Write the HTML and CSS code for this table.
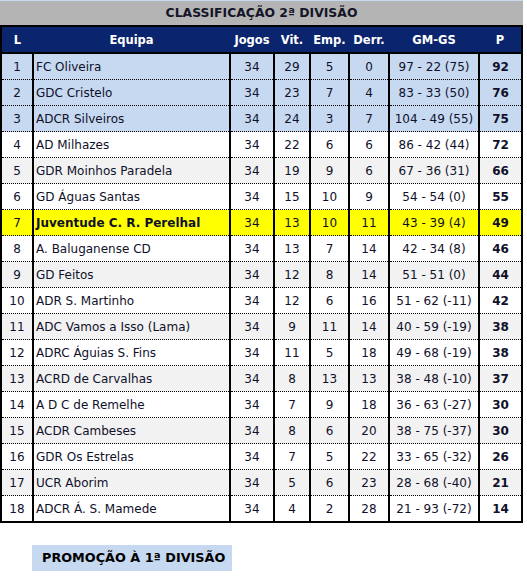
FILE: index.html
```html
<!DOCTYPE html>
<html lang="pt">
<head>
<meta charset="utf-8">
<title>Classificação 2ª Divisão</title>
<link rel="stylesheet" href="styles.css">
</head>
<body>
<div class="page">
  <div class="title">CLASSIFICAÇÃO 2ª DIVISÃO</div>
  <table class="standings">
    <colgroup>
      <col class="c-pos"><col class="c-team"><col class="c-j"><col class="c-v"><col class="c-e"><col class="c-d"><col class="c-g"><col class="c-p">
    </colgroup>
    <thead>
      <tr><th>L</th><th>Equipa</th><th>Jogos</th><th>Vit.</th><th>Emp.</th><th>Derr.</th><th>GM-GS</th><th>P</th></tr>
    </thead>
    <tbody>
      <tr class="promo"><td>1</td><td class="team">FC Oliveira</td><td>34</td><td>29</td><td>5</td><td>0</td><td>97 - 22 (75)</td><td class="pts">92</td></tr>
      <tr class="promo"><td>2</td><td class="team">GDC Cristelo</td><td>34</td><td>23</td><td>7</td><td>4</td><td>83 - 33 (50)</td><td class="pts">76</td></tr>
      <tr class="promo"><td>3</td><td class="team">ADCR Silveiros</td><td>34</td><td>24</td><td>3</td><td>7</td><td>104 - 49 (55)</td><td class="pts">75</td></tr>
      <tr class="w"><td>4</td><td class="team">AD Milhazes</td><td>34</td><td>22</td><td>6</td><td>6</td><td>86 - 42 (44)</td><td class="pts">72</td></tr>
      <tr class="g"><td>5</td><td class="team">GDR Moinhos Paradela</td><td>34</td><td>19</td><td>9</td><td>6</td><td>67 - 36 (31)</td><td class="pts">66</td></tr>
      <tr class="w"><td>6</td><td class="team">GD Águas Santas</td><td>34</td><td>15</td><td>10</td><td>9</td><td>54 - 54 (0)</td><td class="pts">55</td></tr>
      <tr class="hl"><td>7</td><td class="team">Juventude C. R. Perelhal</td><td>34</td><td>13</td><td>10</td><td>11</td><td>43 - 39 (4)</td><td class="pts">49</td></tr>
      <tr class="w"><td>8</td><td class="team">A. Baluganense CD</td><td>34</td><td>13</td><td>7</td><td>14</td><td>42 - 34 (8)</td><td class="pts">46</td></tr>
      <tr class="g"><td>9</td><td class="team">GD Feitos</td><td>34</td><td>12</td><td>8</td><td>14</td><td>51 - 51 (0)</td><td class="pts">44</td></tr>
      <tr class="w"><td>10</td><td class="team">ADR S. Martinho</td><td>34</td><td>12</td><td>6</td><td>16</td><td>51 - 62 (-11)</td><td class="pts">42</td></tr>
      <tr class="g"><td>11</td><td class="team">ADC Vamos a Isso (Lama)</td><td>34</td><td>9</td><td>11</td><td>14</td><td>40 - 59 (-19)</td><td class="pts">38</td></tr>
      <tr class="w"><td>12</td><td class="team">ADRC Águias S. Fins</td><td>34</td><td>11</td><td>5</td><td>18</td><td>49 - 68 (-19)</td><td class="pts">38</td></tr>
      <tr class="g"><td>13</td><td class="team">ACRD de Carvalhas</td><td>34</td><td>8</td><td>13</td><td>13</td><td>38 - 48 (-10)</td><td class="pts">37</td></tr>
      <tr class="w"><td>14</td><td class="team">A D C de Remelhe</td><td>34</td><td>7</td><td>9</td><td>18</td><td>36 - 63 (-27)</td><td class="pts">30</td></tr>
      <tr class="g"><td>15</td><td class="team">ACDR Cambeses</td><td>34</td><td>8</td><td>6</td><td>20</td><td>38 - 75 (-37)</td><td class="pts">30</td></tr>
      <tr class="w"><td>16</td><td class="team">GDR Os Estrelas</td><td>34</td><td>7</td><td>5</td><td>22</td><td>33 - 65 (-32)</td><td class="pts">26</td></tr>
      <tr class="g"><td>17</td><td class="team">UCR Aborim</td><td>34</td><td>5</td><td>6</td><td>23</td><td>28 - 68 (-40)</td><td class="pts">21</td></tr>
      <tr class="w"><td>18</td><td class="team">ADCR Á. S. Mamede</td><td>34</td><td>4</td><td>2</td><td>28</td><td>21 - 93 (-72)</td><td class="pts">14</td></tr>
    </tbody>
  </table>
  <div class="legend">
    <div class="legend-box">PROMOÇÃO À 1ª DIVISÃO</div>
  </div>
</div>
</body>
</html>
```
FILE: styles.css
```css
html, body {
  margin: 0;
  padding: 0;
  background: #ffffff;
}
body {
  font-family: "DejaVu Sans", Verdana, sans-serif;
  font-size: 12px;
  color: #10102a;
}
.page {
  width: 523px;
  border-top: 1px solid #c6d9f1;
}
.title {
  background: #b4b4b4;
  height: 24px;
  line-height: 24px;
  text-align: center;
  font-weight: bold;
  font-size: 12.4px;
  color: #141428;
}
.standings {
  width: 523px;
  border-collapse: collapse;
  table-layout: fixed;
  border: 2px solid #000;
}
.c-pos { width: 32px; }
.c-team { width: 197px; }
.c-j { width: 44px; }
.c-v { width: 36px; }
.c-e { width: 39px; }
.c-d { width: 40px; }
.c-g { width: 90px; }
.c-p { width: 43px; }
.standings th {
  background: #0b246e;
  color: #ffffff;
  font-weight: bold;
  font-size: 11.5px;
  height: 25px;
  padding: 0;
  text-align: center;
  border-bottom: 2px solid #000;
}
.standings td {
  height: 24px;
  padding: 1px 0 0;
  text-align: center;
  white-space: nowrap;
  border-left: 2px solid #000;
  border-right: 2px solid #000;
  border-bottom: 1px dotted #000;
}
.standings tr:last-child td {
  border-bottom: 2px solid #000;
}
.standings td.team {
  text-align: left;
  padding-left: 2px;
}
.standings td.pts {
  font-weight: bold;
}
.promo td { background: #c6d9f1; }
.w td { background: #ffffff; }
.g td { background: #f2f2f2; }
.hl td { background: #ffff00; }
.hl td.team { font-weight: bold; }
.legend {
  padding: 22px 0 0 32px;
}
.legend-box {
  display: inline-block;
  background: #c6d9f1;
  height: 26px;
  line-height: 26px;
  padding: 0 7px 0 10px;
  font-weight: bold;
  font-size: 12.8px;
  color: #000;
}
```
